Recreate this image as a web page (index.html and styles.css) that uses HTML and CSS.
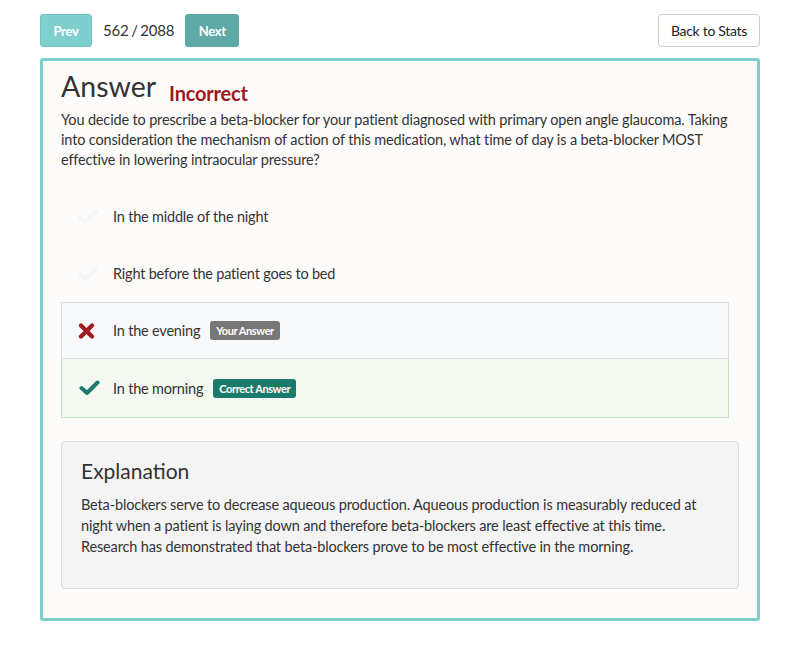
FILE: index.html
```html
<!DOCTYPE html>
<html>
<head>
<meta charset="utf-8">
<link rel="stylesheet" href="styles.css">
</head>
<body>
<div class="page">
  <div class="topbar">
    <div class="nav">
      <button class="btn btn-prev">Prev</button>
      <span class="count">562 / 2088</span>
      <button class="btn btn-next">Next</button>
    </div>
    <button class="btn-back">Back to Stats</button>
  </div>
  <div class="card">
    <div class="heading">
      <h1>Answer</h1>
      <span class="status">Incorrect</span>
    </div>
    <p class="question">You decide to prescribe a beta-blocker for your patient diagnosed with primary open angle glaucoma. Taking into consideration the mechanism of action of this medication, what time of day is a beta-blocker MOST effective in lowering intraocular pressure?</p>
    <ul class="options">
      <li class="option">
        <span class="icon faint"><svg width="20" height="16" viewBox="0 0 20 16"><path d="M2 8.5 L7 13 L18 3" fill="none" stroke="currentColor" stroke-width="4" stroke-linecap="round" stroke-linejoin="round"/></svg></span>
        <span class="text">In the middle of the night</span>
      </li>
      <li class="option">
        <span class="icon faint"><svg width="20" height="16" viewBox="0 0 20 16"><path d="M2 8.5 L7 13 L18 3" fill="none" stroke="currentColor" stroke-width="4" stroke-linecap="round" stroke-linejoin="round"/></svg></span>
        <span class="text">Right before the patient goes to bed</span>
      </li>
      <li class="option wrong">
        <span class="icon x"><svg width="17" height="16" viewBox="0 0 17 16"><path d="M3 2.5 L14 13.5 M14 2.5 L3 13.5" fill="none" stroke="currentColor" stroke-width="4.2" stroke-linecap="round"/></svg></span>
        <span class="text">In the evening</span>
        <span class="badge badge-grey">Your Answer</span>
      </li>
      <li class="option right">
        <span class="icon check"><svg width="21" height="16" viewBox="0 0 21 16"><path d="M2.5 8 L8 13 L18.5 2.5" fill="none" stroke="currentColor" stroke-width="4" stroke-linecap="round" stroke-linejoin="round"/></svg></span>
        <span class="text">In the morning</span>
        <span class="badge badge-green">Correct Answer</span>
      </li>
    </ul>
    <div class="explanation">
      <h2>Explanation</h2>
      <p>Beta-blockers serve to decrease aqueous production. Aqueous production is measurably reduced at night when a patient is laying down and therefore beta-blockers are least effective at this time. Research has demonstrated that beta-blockers prove to be most effective in the morning.</p>
    </div>
  </div>
</div>
</body>
</html>
```
FILE: styles.css
```css
* { box-sizing: border-box; }
html, body { margin: 0; padding: 0; background: #ffffff; }
body {
  font-family: Lato, "Noto Sans", sans-serif;
  color: #333333;
  font-size: 14.5px;
}
.page {
  width: 720px;
  margin-left: 40px;
  padding-top: 14px;
}
.topbar {
  display: flex;
  justify-content: space-between;
  align-items: center;
  height: 33px;
}
.nav {
  display: flex;
  align-items: center;
}
.btn {
  height: 33px;
  border: none;
  border-radius: 3px;
  color: #ffffff;
  font-family: Lato, sans-serif;
  font-weight: 700;
  font-size: 13px;
  letter-spacing: -0.3px;
  padding: 0;
}
.btn-prev {
  width: 52px;
  background: #7ecfcd;
  border: 1px solid #72c4c2;
}
.btn-next {
  width: 54px;
  background: #5fa9a6;
}
.count {
  font-size: 15px;
  word-spacing: -1px;
  letter-spacing: -0.2px;
  color: #333;
  margin: 0 11px 0 11px;
  position: relative;
  top: -1px;
}
.btn-back {
  height: 33px;
  width: 102px;
  background: #ffffff;
  border: 1px solid #cccccc;
  border-radius: 4px;
  font-family: Lato, sans-serif;
  font-size: 14px;
  letter-spacing: -0.3px;
  color: #222;
  padding: 0;
}
.card {
  margin-top: 11px;
  border: 3px solid #7ccfcc;
  border-radius: 3px;
  background: #fdfcfb;
  padding: 7px 18px 29px 18px;
}
.heading {
  display: flex;
  align-items: baseline;
  height: 42px;
}
h1 {
  margin: 0;
  font-size: 28.5px;
  font-weight: 400;
  color: #333;
  line-height: 36px;
}
.status {
  margin-left: 13px;
  font-size: 20px;
  font-weight: 700;
  letter-spacing: -0.2px;
  color: #a0181b;
  position: relative;
  top: 4px;
}
.question {
  margin: 0;
  line-height: 20px;
  font-size: 14.5px;
  letter-spacing: -0.15px;
  color: #333;
}
.options {
  list-style: none;
  margin: 18px 10px 0 0;
  padding: 0;
}
.option {
  display: flex;
  align-items: center;
  height: 57px;
  padding-left: 16px;
  border: 1px solid transparent;
}
.option .icon {
  width: 35px;
  display: flex;
  align-items: center;
}
.option .text {
  font-size: 14.5px;
  letter-spacing: -0.2px;
  color: #333;
}
.faint { color: #f6f6f6; }
.option.wrong {
  background: #f8f9fa;
  border: 1px solid #dddddd;
}
.option.right {
  background: #f3f9f1;
  border: 1px solid #c5e3bc;
  border-top: none;
  height: 59px;
}
.x { color: #a11a1d; }
.check { color: #1b7a6c; padding-left: 1px; }
.badge {
  display: inline-block;
  margin-left: 10px;
  font-size: 11px;
  font-weight: 700;
  letter-spacing: -0.4px;
  color: #ffffff;
  padding: 3px 6px;
  border-radius: 3px;
  line-height: 13px;
}
.badge-grey { background: #777777; }
.badge-green { background: #1a7b6c; }
.explanation {
  margin-top: 23px;
  background: #f4f4f4;
  border: 1px solid #dddddd;
  border-radius: 4px;
  padding: 16px 20px 31px 19px;
}
h2 {
  margin: 0 0 10px 0;
  font-size: 21px;
  font-weight: 400;
  line-height: 26px;
  color: #333;
}
.explanation p {
  margin: 0;
  line-height: 21px;
  font-size: 14.5px;
  letter-spacing: -0.15px;
  color: #333;
}
```
